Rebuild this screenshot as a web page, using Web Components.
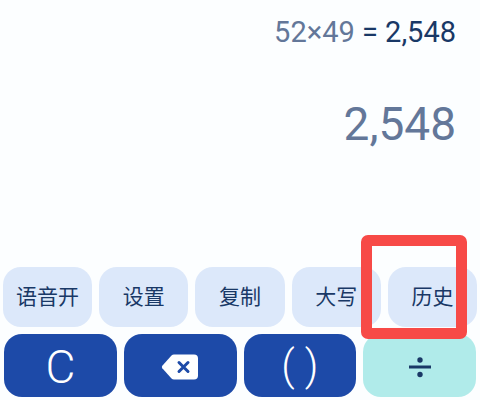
<!DOCTYPE html>
<html lang="zh-CN">
<head>
<meta charset="UTF-8">
<meta name="viewport" content="width=device-width, initial-scale=1.0">
<title>计算器</title>
<style>
    * {
        box-sizing: border-box;
    }

    body {
        margin: 0;
        background: #fcfeff;
        font-family: Roboto, "Noto Sans CJK SC", sans-serif;
    }
</style>
</head>
<body>
<calc-app>
    <calc-display slot="display">
        <span slot="expression">52×49</span>
        <span slot="answer">= 2,548</span>
        <span slot="result">2,548</span>
    </calc-display>

    <calc-row slot="tools" class="tools">
        <calc-key kind="tool">语音开</calc-key>
        <calc-key kind="tool">设置</calc-key>
        <calc-key kind="tool">复制</calc-key>
        <calc-key kind="tool">大写</calc-key>
        <calc-key kind="tool" marked>历史</calc-key>
    </calc-row>

    <calc-row slot="keys" class="keys">
        <calc-key kind="main">C</calc-key>
        <calc-key kind="main" label="退格">
            <svg width="38" height="28" viewBox="0 0 38 28">
                <path d="M13 1.5H33a4 4 0 0 1 4 4V22.500a4 4 0 0 1-4 4H13Q11.500 26.500 10.500 25.500L1.300 15.200Q.3 14 1.300 12.800L10.500 2.500Q11.500 1.500 13 1.500Z" fill="#fff"/>
                <path d="M18 9.500l9 9M27 9.500l-9 9" stroke="#1d4aa8" stroke-width="3" stroke-linecap="round"/>
            </svg>
        </calc-key>
        <calc-key kind="paren">( )</calc-key>
        <calc-key kind="operator" label="除以">
            <svg width="24" height="22" viewBox="0 0 24 22">
                <path d="M1 11H23" stroke="#193866" stroke-width="3"/>
                <circle cx="12" cy="4" r="2.7" fill="#193866"/>
                <circle cx="12" cy="18.500" r="2.7" fill="#193866"/>
            </svg>
        </calc-key>
    </calc-row>
</calc-app>

<script>
// Page shell: display on top, key rows at the bottom
class CalcApp extends HTMLElement {
    constructor() {
        super();
        this.attachShadow({ mode: 'open' });
        this.shadowRoot.innerHTML = `
            <style>
                :host {
                    display: flex;
                    flex-direction: column;
                    min-height: 100vh;
                    padding-bottom: 3px;
                    box-sizing: border-box;
                }

                main {
                    flex: 1;
                }

                .pad {
                    display: flex;
                    flex-direction: column;
                    gap: 7px;
                }
            </style>
            <main><slot name="display"></slot></main>
            <div class="pad">
                <slot name="tools"></slot>
                <slot name="keys"></slot>
            </div>
        `;
    }
}

// Expression line and the large result below it
class CalcDisplay extends HTMLElement {
    constructor() {
        super();
        this.attachShadow({ mode: 'open' });
        this.shadowRoot.innerHTML = `
            <style>
                :host {
                    display: flex;
                    flex-direction: column;
                    gap: 48px;
                    padding: 14px 24px 0;
                    text-align: right;
                    color: #637799;
                }

                .line {
                    font-size: 29px;
                    line-height: 36px;
                }

                .answer {
                    color: #193866;
                }

                .result {
                    font-size: 46px;
                    line-height: 52px;
                }
            </style>
            <div class="line"><slot name="expression"></slot> <span class="answer"><slot name="answer"></slot></span></div>
            <div class="result"><slot name="result"></slot></div>
        `;
    }
}

// Equal-width row of keys
class CalcRow extends HTMLElement {
    constructor() {
        super();
        this.attachShadow({ mode: 'open' });
        this.shadowRoot.innerHTML = `
            <style>
                :host {
                    display: grid;
                    grid-auto-flow: column;
                    grid-auto-columns: minmax(0, 1fr);
                    gap: 7px;
                    padding: 0 4px;
                }

                :host(.tools) {
                    padding: 0 3px;
                }
            </style>
            <slot></slot>
        `;
    }
}

class CalcKey extends HTMLElement {
    constructor() {
        super();
        this.attachShadow({ mode: 'open' });
    }

    connectedCallback() {
        const label = this.getAttribute('label');
        this.shadowRoot.innerHTML = `
            <style>
                :host {
                    display: block;
                    position: relative;
                }

                button {
                    display: flex;
                    align-items: center;
                    justify-content: center;
                    width: 100%;
                    height: 63px;
                    margin: 0;
                    padding: 3px 0 0;
                    border: 0;
                    border-radius: 18px;
                    background: #1d4aa8;
                    color: #ffffff;
                    font-family: inherit;
                    font-size: 46px;
                    font-weight: 300;
                    line-height: 52px;
                    cursor: pointer;
                }

                :host([kind="tool"]) button {
                    height: 60px;
                    padding: 0;
                    background: #dce8fa;
                    color: #193866;
                    font-size: 21px;
                    font-weight: 400;
                    line-height: 28px;
                }

                :host([kind="paren"]) button {
                    padding: 0;
                    font-size: 42px;
                }

                :host([kind="operator"]) button {
                    background: #b0ebea;
                    color: #193866;
                }

                /* Highlight frame drawn over the key */
                .mark {
                    position: absolute;
                    top: -32px;
                    right: 10px;
                    bottom: -12px;
                    left: -27px;
                    border: 11px solid #f74a47;
                    border-radius: 7px;
                    z-index: 1;
                    pointer-events: none;
                }
            </style>
            <button type="button"${label ? ` aria-label="${label}"` : ''}><slot></slot></button>
            ${this.hasAttribute('marked') ? '<div class="mark"></div>' : ''}
        `;
    }
}

customElements.define('calc-app', CalcApp);
customElements.define('calc-display', CalcDisplay);
customElements.define('calc-row', CalcRow);
customElements.define('calc-key', CalcKey);
</script>
</body>
</html>
